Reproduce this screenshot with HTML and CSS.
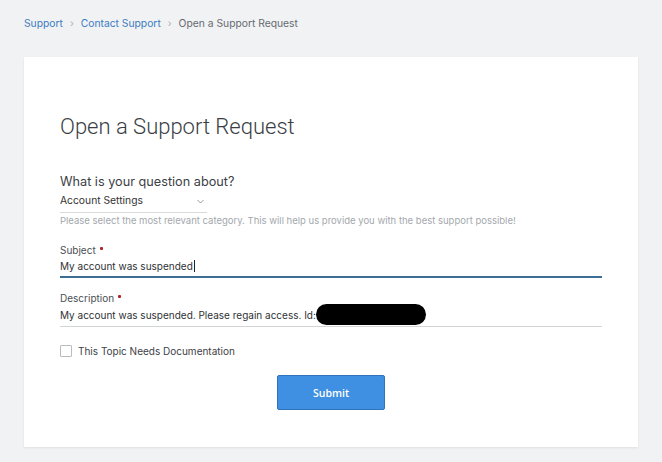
FILE: index.html
```html
<!DOCTYPE html>
<html>
<head>
<meta charset="utf-8">
<link rel="stylesheet" href="styles.css">
</head>
<body>
<nav class="crumbs">
  <a class="crumb-link" href="#">Support</a>
  <span class="crumb-sep">›</span>
  <a class="crumb-link" href="#">Contact Support</a>
  <span class="crumb-sep">›</span>
  <span class="crumb-current">Open a Support Request</span>
</nav>
<main class="card">
  <h1 class="title">Open a Support Request</h1>
  <div class="question">What is your question about?</div>
  <div class="select">
    <span>Account Settings</span>
    <svg class="chev" width="7" height="5" viewBox="0 0 7 5"><path d="M0.5 1 L3.5 4 L6.5 1" fill="none" stroke="#9aa0a6" stroke-width="1"/></svg>
  </div>
  <div class="help">Please select the most relevant category. This will help us provide you with the best support possible!</div>
  <div class="field field-subject">
    <div class="label">Subject <span class="req"></span></div>
    <div class="input active">My account was suspended<span class="caret"></span></div>
  </div>
  <div class="field field-desc">
    <div class="label">Description <span class="req"></span></div>
    <div class="input">My account was suspended. Please regain access. Id:<span class="redact"></span></div>
  </div>
  <label class="check"><span class="box"></span>This Topic Needs Documentation</label>
  <div class="actions"><button class="submit">Submit</button></div>
</main>
</body>
</html>
```
FILE: styles.css
```css
* { box-sizing: border-box; }
html, body { margin: 0; padding: 0; }
body {
  background: #f1f2f4;
  font-family: "Inter", "Noto Sans", sans-serif;
  color: #333;
  width: 662px;
  height: 462px;
  overflow: hidden;
}
.crumbs {
  height: 57px;
  padding: 17px 24px 0;
  font-size: 10.3px;
  line-height: 13px;
  display: flex;
  align-items: flex-start;
}
.crumb-link { color: #3c7cc0; text-decoration: none; }
.crumb-sep { color: #aab0b6; margin: 0 7px; font-size: 10px; }
.crumb-current { color: #666b70; }
.card {
  margin: 0 24px;
  width: 614px;
  height: 390px;
  background: #fff;
  box-shadow: 0 1px 2px rgba(0,0,0,0.08);
  padding: 57px 36px 0;
}
.title {
  margin: 0;
  font-family: "Roboto", sans-serif;
  font-weight: 300;
  font-size: 22px;
  line-height: 26px;
  color: #3a3e44;
}
.question {
  margin-top: 34px;
  font-size: 12.7px;
  line-height: 16px;
  color: #3c4146;
}
.select {
  margin-top: 3px;
  width: 147px;
  height: 20px;
  border-bottom: 1px solid #d7dadd;
  font-size: 10.3px;
  line-height: 14px;
  display: flex;
  justify-content: space-between;
  align-items: center;
  padding: 0 3px 5px 0;
  color: #333;
}
.chev { margin-top: 2px; }
.help {
  margin-top: 2px;
  font-size: 9.5px;
  line-height: 12px;
  color: #a3a8ad;
}
.field { width: 542px; }
.field-subject { margin-top: 17px; }
.field-desc { margin-top: 14px; }
.label {
  font-size: 10px;
  line-height: 13px;
  color: #4a4f54;
  display: flex;
  align-items: center;
}
.req {
  display: inline-block;
  width: 3px; height: 3px;
  background: #b0222a;
  border-radius: 1px;
  margin-left: 4px;
  margin-top: -4px;
}
.input {
  margin-top: 2px;
  font-size: 10px;
  line-height: 14px;
  color: #2e3236;
  padding-bottom: 4px;
  border-bottom: 1px solid #d2d5d8;
  display: flex;
  align-items: center;
  height: 20px;
}
.input.active { border-bottom: 2px solid #3b6d95; height: 19px; padding-bottom: 3px; }
.caret { display: inline-block; width: 1px; height: 12px; background: #222; margin-left: 1px; }
.redact {
  display: inline-block;
  width: 110px;
  height: 21px;
  background: #000;
  border-radius: 11px;
  margin-top: -1px;
}
.check {
  margin-top: 17px;
  display: flex;
  align-items: center;
  font-size: 10px;
  line-height: 14px;
  color: #3c4146;
}
.box {
  width: 12px; height: 12px;
  border: 1px solid #b8bcc0;
  border-radius: 1px;
  margin-right: 6px;
  background: #fff;
}
.actions {
  display: flex;
  justify-content: center;
  margin-top: 17px;
}
.submit {
  width: 108px;
  height: 35px;
  background: #3f8fe2;
  border: 1px solid #2f73bb;
  border-radius: 2px;
  color: #fff;
  font-family: "Open Sans", sans-serif;
  font-size: 10.5px;
  font-weight: 600;
}
```
